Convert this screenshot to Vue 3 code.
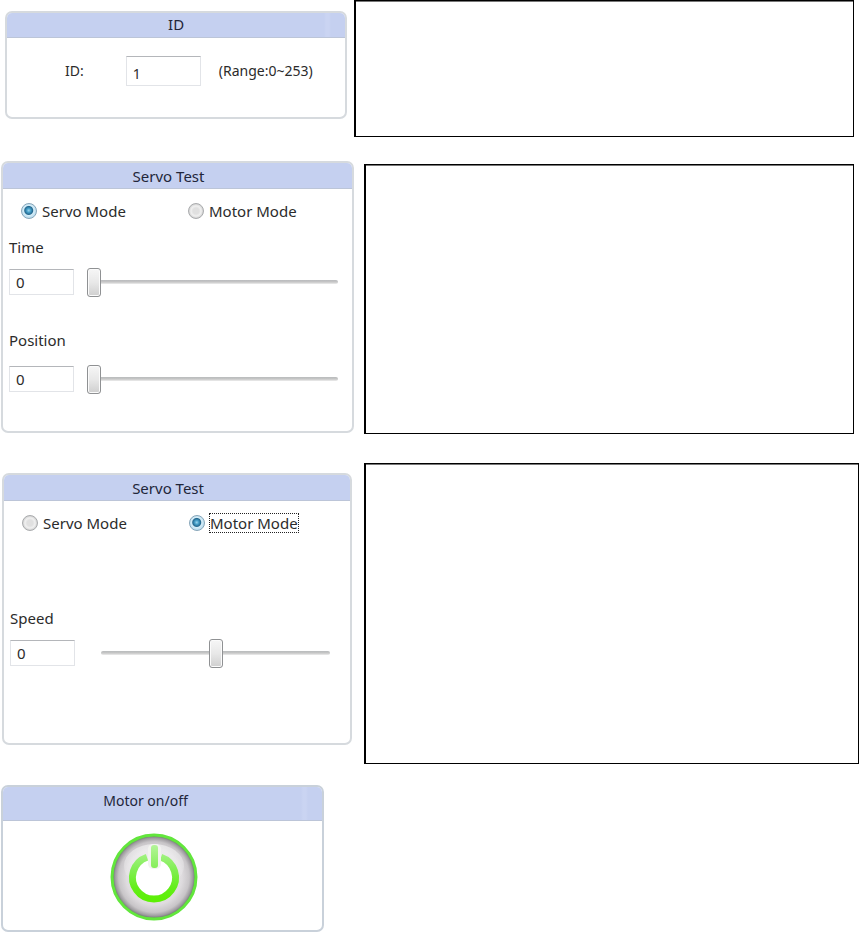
<template>
    <main class="page">
        <section class="row row-id">
            <form class="panel" @submit.prevent>
                <h2 class="panel-head head-shine">ID</h2>
                <div class="id-body">
                    <label for="servo-id">ID:</label>
                    <input id="servo-id" v-model="servoId" class="text-box id-box" type="text">
                    <span>(Range:0~253)</span>
                </div>
            </form>
            <div class="note"></div>
        </section>

        <section v-for="p in panels" :key="p.name" class="row" :class="'row-' + p.name">
            <form class="panel" @submit.prevent>
                <h2 class="panel-head head-left">Servo Test</h2>
                <div class="modes">
                    <label v-for="m in modes" :key="m.value" class="mode">
                        <input v-model="p.mode" type="radio" :name="p.name + '-mode'" :value="m.value">
                        <span :class="{ focused: p.focused === m.value }">{{ m.text }}</span>
                    </label>
                </div>
                <div v-for="f in p.fields" :key="f.label" class="field">
                    <label class="field-label" :for="f.label">{{ f.label }}</label>
                    <div class="field-row">
                        <input :id="f.label" v-model="f.value" class="text-box" type="text">
                        <input v-model="f.value" class="slider" type="range" :min="f.min" :max="f.max" :aria-label="f.label">
                    </div>
                </div>
            </form>
            <div class="note"></div>
        </section>

        <section class="row row-power">
            <div class="panel">
                <h2 class="panel-head head-shine">Motor on/off</h2>
                <div class="power-body">
                    <button class="power" type="button" aria-label="Motor on/off" :aria-pressed="motorOn" @click="motorOn = !motorOn">
                        <svg viewBox="0 0 88 88" width="88" height="88">
                            <defs>
                                <radialGradient id="metal" cx="50%" cy="50%" r="50%">
                                    <stop offset="0" stop-color="#f0eef0" />
                                    <stop offset="0.66" stop-color="#dfdcdf" />
                                    <stop offset="0.84" stop-color="#c8c5c8" />
                                    <stop offset="0.93" stop-color="#9d9a9e" />
                                    <stop offset="1" stop-color="#56665a" />
                                </radialGradient>
                                <linearGradient id="gloss" x1="0" y1="0" x2="0" y2="1">
                                    <stop offset="0" stop-color="#fff" stop-opacity="0.5" />
                                    <stop offset="1" stop-color="#fff" stop-opacity="0" />
                                </linearGradient>
                                <linearGradient id="green" gradientUnits="userSpaceOnUse" x1="0" y1="12" x2="0" y2="70">
                                    <stop offset="0" stop-color="#b4f59a" />
                                    <stop offset="0.4" stop-color="#84ee58" />
                                    <stop offset="0.75" stop-color="#62ee18" />
                                    <stop offset="1" stop-color="#5cf000" />
                                </linearGradient>
                            </defs>
                            <circle cx="44" cy="44" r="42" fill="url(#metal)" stroke="#62e63c" stroke-width="3" />
                            <ellipse cx="44" cy="33" rx="30" ry="22" fill="url(#gloss)" />
                            <circle cx="44" cy="45" r="20" fill="#fff" />
                            <path d="M37 24.2A21.5 21.5 0 1 0 51 24.2" fill="none" stroke="url(#green)" stroke-width="7" />
                            <rect x="38" y="11" width="13" height="25" rx="5" fill="#f2f3f0" />
                            <rect x="41" y="12" width="7" height="23" rx="3" fill="url(#green)" />
                        </svg>
                    </button>
                </div>
            </div>
        </section>
    </main>
</template>

<script setup>
    import { ref } from 'vue';

    const servoId = ref('1');
    const motorOn = ref(true);

    const modes = [
        { value: 'servo', text: 'Servo Mode' },
        { value: 'motor', text: 'Motor Mode' },
    ];

    const panels = ref([
        {
            name: 'servo',
            mode: 'servo',
            focused: '',
            fields: [
                { label: 'Time', value: 0, min: 0, max: 30000 },
                { label: 'Position', value: 0, min: 0, max: 1000 },
            ],
        },
        {
            name: 'motor',
            mode: 'motor',
            focused: 'motor',
            fields: [
                { label: 'Speed', value: 0, min: -1000, max: 1000 },
            ],
        },
    ]);
</script>

<style>
    body {
        margin: 0;
        background: #fff;
    }
</style>

<style scoped>
    .page {
        font-family: "Noto Sans", "Open Sans", sans-serif;
        font-size: 15px;
        line-height: 20px;
        color: #2b2b2b;
    }
    .row {
        display: flex;
        align-items: flex-start;
    }
    .panel {
        box-sizing: border-box;
        border: 2px solid #d6dade;
        border-radius: 7px;
        background: #fff;
        overflow: hidden;
    }
    .panel-head {
        margin: 0;
        padding: 3px 0 2px;
        border-bottom: 1px solid #bcc5d8;
        background: #c5d0f0;
        font-size: 15px;
        font-weight: 400;
        line-height: 20px;
        text-align: center;
        color: #22263a;
    }
    .head-left {
        padding-right: 18px;
    }
    .head-shine {
        background: linear-gradient(to left, #c5d0f0 14px, #cad4f2 16px, #cad4f2 19px, #c5d0f0 21px);
    }
    .note {
        box-sizing: border-box;
        border: 1px solid #000;
        border-left-width: 2px;
        box-shadow: inset 0 1px #777;
    }
    .text-box {
        box-sizing: border-box;
        width: 65px;
        height: 26px;
        padding: 0 6px;
        border: 1px solid #e2e4e8;
        border-top-color: #b4b6ba;
        background: #fff;
        font: inherit;
        color: inherit;
        outline: none;
    }

    .row-id {
        padding-left: 5px;
        padding-right: 5px;
    }
    .row-id .panel {
        flex: 341 1 0;
        margin: 11px 7px 0 0;
    }
    .row-id .panel-head {
        padding: 1px 0 3px;
    }
    .row-id .note {
        flex: 501 1 0;
        min-height: 137px;
    }
    .id-body {
        display: flex;
        align-items: center;
        padding: 18px 0 31px 58px;
        font-size: 14px;
    }
    .id-box {
        width: 75px;
        height: 30px;
        margin: 0 18px 0 42px;
        padding-top: 4px;
    }

    .row-servo {
        padding: 24px 5px 0 1px;
    }
    .row-servo .panel {
        flex: 352 1 0;
        margin-right: 10px;
        padding-bottom: 37px;
    }
    .row-servo .note {
        flex: 491 1 0;
        min-height: 270px;
        margin-top: 3px;
    }
    .row-motor {
        padding: 29px 0 0 2px;
    }
    .row-motor .panel {
        flex: 349 1 0;
        margin: 10px 12px 0 0;
        padding-bottom: 75px;
    }
    .row-motor .note {
        flex: 496 1 0;
        min-height: 301px;
    }
    .modes {
        display: flex;
        gap: 31px;
        padding: 12px 0 0 18px;
    }
    .mode {
        display: flex;
        align-items: center;
        gap: 4px;
        width: 136px;
    }
    .mode span {
        border: 1px dotted transparent;
        line-height: 18px;
    }
    .mode .focused {
        border-color: #222;
    }
    .mode input {
        appearance: none;
        box-sizing: border-box;
        flex: none;
        width: 16px;
        height: 16px;
        margin: 0;
        border: 1px solid #a9abad;
        border-radius: 50%;
        background: radial-gradient(circle, #e0e0e0 0 3px, #f0f0f0 5px, #d4d4d4 7px);
    }
    .mode input:checked {
        border-color: #86a5b9;
        background: radial-gradient(circle at 48% 46%, #9ad4ec 0, #459fc8 2px, #24688f 4px, #d5edf8 5px, #b5d9ec 8px);
    }
    .field {
        padding: 16px 14px 0 6px;
    }
    .field + .field {
        padding-top: 33px;
    }
    .row-motor .field {
        padding-top: 75px;
        padding-right: 20px;
    }
    .field-label {
        display: block;
        margin-bottom: 10px;
    }
    .field + .field .field-label {
        margin-bottom: 14px;
    }
    .field-row {
        display: flex;
        align-items: center;
        gap: 13px;
        height: 30px;
    }
    .row-motor .field-row {
        gap: 26px;
    }
    .slider {
        appearance: none;
        flex: 1;
        min-width: 0;
        height: 30px;
        margin: 0;
        background: transparent;
    }
    .slider::-webkit-slider-runnable-track {
        height: 4px;
        border-radius: 2px;
        background: linear-gradient(#b9bbbd, #c6c6c6 50%, #eeeeee);
    }
    .slider::-webkit-slider-thumb {
        appearance: none;
        box-sizing: border-box;
        width: 14px;
        height: 29px;
        margin-top: -12px;
        border: 1px solid #8f9193;
        border-radius: 3px;
        background: linear-gradient(#f6f6f6, #e8e8e8 50%, #cfcfcf);
        box-shadow: inset 0 0 0 1px #fbfbfb;
    }

    .row-power {
        padding: 21px 0 0 1px;
    }
    .row-power .panel {
        flex: 0 0 323px;
        max-width: 100%;
        border-color: #c9d1da;
    }
    .row-power .panel-head {
        padding: 4px 34px 9px 0;
        font-size: 14px;
    }
    .power-body {
        display: flex;
        justify-content: center;
        padding: 12px 18px 9px 0;
    }
    .power {
        width: 88px;
        height: 88px;
        padding: 0;
        border: 0;
        border-radius: 50%;
        background: none;
        cursor: pointer;
    }
    .power svg {
        display: block;
    }
</style>
